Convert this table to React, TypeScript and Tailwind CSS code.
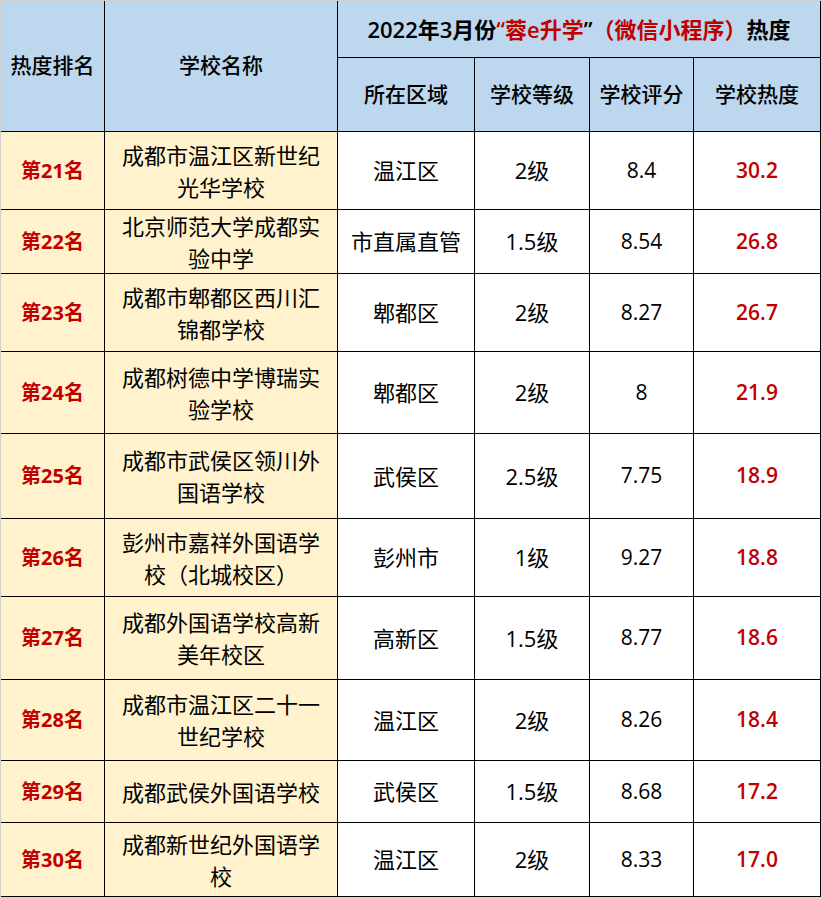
const rows = [
  { rank: "第21名", name: "成都市温江区新世纪光华学校", area: "温江区", level: "2级", score: "8.4", heat: "30.2" },
  { rank: "第22名", name: "北京师范大学成都实验中学", area: "市直属直管", level: "1.5级", score: "8.54", heat: "26.8" },
  { rank: "第23名", name: "成都市郫都区西川汇锦都学校", area: "郫都区", level: "2级", score: "8.27", heat: "26.7" },
  { rank: "第24名", name: "成都树德中学博瑞实验学校", area: "郫都区", level: "2级", score: "8", heat: "21.9" },
  { rank: "第25名", name: "成都市武侯区领川外国语学校", area: "武侯区", level: "2.5级", score: "7.75", heat: "18.9" },
  { rank: "第26名", name: "彭州市嘉祥外国语学校（北城校区）", area: "彭州市", level: "1级", score: "9.27", heat: "18.8" },
  { rank: "第27名", name: "成都外国语学校高新美年校区", area: "高新区", level: "1.5级", score: "8.77", heat: "18.6" },
  { rank: "第28名", name: "成都市温江区二十一世纪学校", area: "温江区", level: "2级", score: "8.26", heat: "18.4" },
  { rank: "第29名", name: "成都武侯外国语学校", area: "武侯区", level: "1.5级", score: "8.68", heat: "17.2" },
  { rank: "第30名", name: "成都新世纪外国语学校", area: "温江区", level: "2级", score: "8.33", heat: "17.0" },
];

const cell = "flex items-center justify-center text-center border-r border-b border-black";

export default function App() {
  return (
    <div className="w-[821px] h-[897px] bg-white font-['Open_Sans','Noto_Sans_CJK_SC',sans-serif] text-black [text-spacing-trim:space-all]">
      <div className="grid grid-cols-[104px_233px_137px_115px_104px_127px] grid-rows-[57px_74px_78px_64px_78px_82px_85px_78px_83px_81px_62px_74px] border-l border-t border-l-[#cfcfcf] border-t-[#cfcfcf]">
        <div className={`${cell} row-span-2 bg-[#bdd7ee] text-[21px] font-medium`}>热度排名</div>
        <div className={`${cell} row-span-2 bg-[#bdd7ee] text-[21px] font-medium`}>学校名称</div>
        <div className={`${cell} col-span-4 bg-[#bdd7ee] text-[22px] font-semibold`}>
          <span>
            2022年3月份<span className="text-[#c00000]">“蓉e升学</span>”<span className="text-[#c00000]">（微信小程序）</span>热度
          </span>
        </div>
        <div className={`${cell} bg-[#bdd7ee] text-[21px] font-medium`}>所在区域</div>
        <div className={`${cell} bg-[#bdd7ee] text-[21px] font-medium`}>学校等级</div>
        <div className={`${cell} bg-[#bdd7ee] text-[21px] font-medium`}>学校评分</div>
        <div className={`${cell} bg-[#bdd7ee] text-[21px] font-medium`}>学校热度</div>

        {rows.map((r) => (
          <div key={r.rank} className="contents">
            <div className={`${cell} bg-[#fff2cc] text-[20px] font-bold text-[#c00000]`}>{r.rank}</div>
            <div className={`${cell} bg-[#fff2cc] px-2 text-[22px] leading-[32px]`}>{r.name}</div>
            <div className={`${cell} text-[22px]`}>{r.area}</div>
            <div className={`${cell} text-[22px]`}>{r.level}</div>
            <div className={`${cell} text-[21px]`}>{r.score}</div>
            <div className={`${cell} text-[21px] font-semibold text-[#c00000]`}>{r.heat}</div>
          </div>
        ))}
      </div>
    </div>
  );
}
